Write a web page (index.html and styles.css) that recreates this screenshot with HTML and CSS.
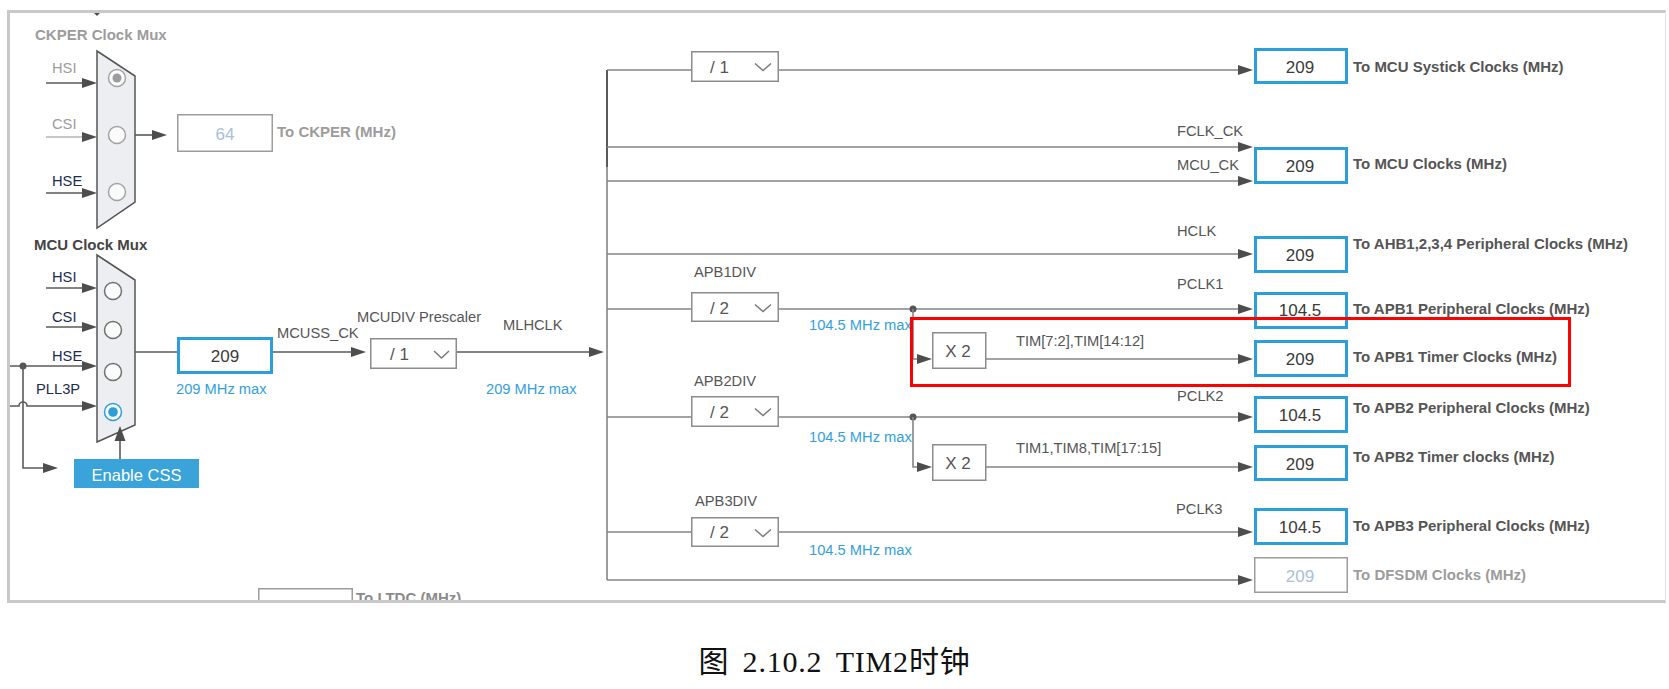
FILE: index.html
```html
<!DOCTYPE html>
<html lang="zh">
<head>
<meta charset="utf-8">
<title>TIM2 Clock</title>
<link rel="stylesheet" href="styles.css">
</head>
<body>
<div class="frame">
<svg class="diagram" viewBox="10 13 1655 587" width="1655" height="587" xmlns="http://www.w3.org/2000/svg">
  <!-- top cut-off mark -->
  <polygon class="ah" points="94,13 100,13 97,16"/>

  <!-- ===== CKPER mux ===== -->
  <text class="tb tdis" x="35" y="40">CKPER Clock Mux</text>
  <text class="t tdis" x="52" y="73">HSI</text>
  <text class="t tdis" x="52" y="129">CSI</text>
  <text class="t tnavy" x="52" y="186">HSE</text>
  <line class="w wd" x1="46" y1="83" x2="84" y2="83"/>
  <polygon class="ah" points="82,78 97,83 82,88"/>
  <line class="w wl" x1="46" y1="137" x2="84" y2="137"/>
  <polygon class="ah" points="82,132 97,137 82,142"/>
  <line class="w wd" x1="46" y1="193" x2="84" y2="193"/>
  <polygon class="ah" points="82,188 97,193 82,198"/>
  <polygon class="mux" points="97,51 135,76 135,202 97,228"/>
  <circle class="rb rb-dis" cx="117" cy="78" r="8.5"/>
  <circle class="rd-dis" cx="117" cy="78" r="4.5"/>
  <circle class="rb rb-dis" cx="117" cy="135" r="8.5"/>
  <circle class="rb rb-dis" cx="117" cy="192" r="8.5"/>
  <line class="w wd" x1="135" y1="135" x2="155" y2="135"/>
  <polygon class="ah" points="152,130 167,135 152,140"/>
  <rect class="gbx" x="177.75" y="114.75" width="94.5" height="36.5"/>
  <text class="v vdis" x="225" y="140">64</text>
  <text class="tb tdis" x="277" y="137">To CKPER (MHz)</text>

  <!-- ===== MCU mux ===== -->
  <text class="tb tdark" x="34" y="250">MCU Clock Mux</text>
  <text class="t tnavy" x="52" y="282">HSI</text>
  <text class="t tnavy" x="52" y="322">CSI</text>
  <text class="t tnavy" x="52" y="361">HSE</text>
  <text class="t tnavy" x="36" y="394">PLL3P</text>
  <line class="w wd" x1="46" y1="288" x2="84" y2="288"/>
  <polygon class="ah" points="82,283 97,288 82,293"/>
  <line class="w wd" x1="46" y1="327" x2="84" y2="327"/>
  <polygon class="ah" points="82,322 97,327 82,332"/>
  <line class="w wd" x1="10" y1="366" x2="84" y2="366"/>
  <polygon class="ah" points="82,361 97,366 82,371"/>
  <circle class="dot" cx="23" cy="366" r="3.5"/>
  <path class="w wd" d="M23 366 V468 H46"/>
  <polygon class="ah" points="43,463 58,468 43,473"/>
  <path class="w wd" d="M10 406 H19 A4 4 0 0 1 27 406 H84"/>
  <polygon class="ah" points="82,401 97,406 82,411"/>
  <polygon class="mux" points="97,255 135,280 135,425 97,442"/>
  <circle class="rb" cx="113" cy="291" r="8.5"/>
  <circle class="rb" cx="113" cy="330" r="8.5"/>
  <circle class="rb" cx="113" cy="372" r="8.5"/>
  <circle class="rb rb-on" cx="113" cy="412" r="8.5"/>
  <circle class="rd-on" cx="113" cy="412" r="4.8"/>
  <line class="w wd" x1="120" y1="459" x2="120" y2="438"/>
  <polygon class="ah" points="114.5,441 120,426 125.5,441"/>
  <rect class="btn" x="74" y="459" width="125" height="29"/>
  <text class="btxt" x="136.5" y="481">Enable CSS</text>

  <line class="w wd" x1="135" y1="352" x2="177" y2="352"/>
  <rect class="bx" x="178.5" y="338.5" width="93" height="34"/>
  <text class="v" x="225" y="362">209</text>
  <text class="tblue" x="176" y="394">209 MHz max</text>
  <text class="t" x="277" y="338">MCUSS_CK</text>
  <line class="w wd" x1="273" y1="352" x2="355" y2="352"/>
  <polygon class="ah" points="351,347 366,352 351,357"/>
  <text class="t" x="357" y="322">MCUDIV Prescaler</text>
  <rect class="dd" x="370.75" y="338.75" width="85.5" height="29.5"/>
  <text class="dt" x="390" y="360">/ 1</text>
  <polyline class="chev" points="434,351 441.5,358 449,351"/>
  <text class="t" x="503" y="330">MLHCLK</text>
  <line class="w wd" x1="457" y1="352" x2="592" y2="352"/>
  <polygon class="ah" points="589,347 604,352 589,357"/>
  <text class="tblue" x="486" y="394">209 MHz max</text>

  <!-- ===== bus ===== -->
  <line class="w" x1="607" y1="70" x2="607" y2="580"/>
  <line class="w wk" x1="607" y1="70" x2="607" y2="167"/>

  <!-- systick -->
  <line class="w" x1="607" y1="70" x2="691" y2="70"/>
  <line class="w" x1="779" y1="70" x2="1241" y2="70"/>
  <polygon class="ah" points="1238,65 1253,70 1238,75"/>
  <rect class="dd" x="691.75" y="51.75" width="86.5" height="29.5"/>
  <text class="dt" x="710" y="73">/ 1</text>
  <polyline class="chev" points="755,63.5 763,70.5 771,63.5"/>
  <rect class="bx" x="1255.5" y="49.5" width="91" height="33"/>
  <text class="v" x="1300" y="73">209</text>
  <text class="tb" x="1353" y="72">To MCU Systick Clocks (MHz)</text>

  <!-- MCU clocks -->
  <line class="w" x1="607" y1="147" x2="1241" y2="147"/>
  <polygon class="ah" points="1238,142 1253,147 1238,152"/>
  <line class="w" x1="607" y1="181" x2="1241" y2="181"/>
  <polygon class="ah" points="1238,176 1253,181 1238,186"/>
  <text class="t" x="1177" y="136">FCLK_CK</text>
  <text class="t" x="1177" y="170">MCU_CK</text>
  <rect class="bx" x="1255.5" y="148.5" width="91" height="34"/>
  <text class="v" x="1300" y="172">209</text>
  <text class="tb" x="1353" y="169">To MCU Clocks (MHz)</text>

  <!-- AHB -->
  <line class="w" x1="607" y1="254" x2="1241" y2="254"/>
  <polygon class="ah" points="1238,249 1253,254 1238,259"/>
  <text class="t" x="1177" y="236">HCLK</text>
  <rect class="bx" x="1255.5" y="237.5" width="91" height="34"/>
  <text class="v" x="1300" y="261">209</text>
  <text class="tb" x="1353" y="249">To AHB1,2,3,4 Peripheral Clocks (MHz)</text>

  <!-- APB1 -->
  <text class="t" x="694" y="277">APB1DIV</text>
  <line class="w" x1="607" y1="309" x2="691" y2="309"/>
  <line class="w" x1="779" y1="309" x2="1241" y2="309"/>
  <polygon class="ah" points="1238,304 1253,309 1238,314"/>
  <rect class="dd" x="691.75" y="292.75" width="86.5" height="28.5"/>
  <text class="dt" x="710" y="314">/ 2</text>
  <polyline class="chev" points="755,304.5 763,311.5 771,304.5"/>
  <text class="tblue" x="809" y="330">104.5 MHz max</text>
  <circle class="dot" cx="913" cy="309" r="3.5"/>
  <path class="w" d="M913 309 V359 H920"/>
  <polygon class="ah" points="917,354 932,359 917,364"/>
  <rect class="dd" x="932.75" y="332.75" width="53" height="35.5"/>
  <text class="v dtc" x="958" y="357">X 2</text>
  <text class="t" x="1016" y="346">TIM[7:2],TIM[14:12]</text>
  <line class="w" x1="986" y1="359" x2="1241" y2="359"/>
  <polygon class="ah" points="1238,354 1253,359 1238,364"/>
  <text class="t" x="1177" y="289">PCLK1</text>
  <rect class="bx" x="1255.5" y="293.5" width="91" height="34"/>
  <text class="v" x="1300" y="316">104.5</text>
  <text class="tb" x="1353" y="314">To APB1 Peripheral Clocks (MHz)</text>
  <rect class="bx" x="1255.5" y="341.5" width="91" height="34"/>
  <text class="v" x="1300" y="365">209</text>
  <text class="tb" x="1353" y="362">To APB1 Timer Clocks (MHz)</text>

  <!-- APB2 -->
  <text class="t" x="694" y="386">APB2DIV</text>
  <line class="w" x1="607" y1="417" x2="691" y2="417"/>
  <line class="w" x1="779" y1="417" x2="1241" y2="417"/>
  <polygon class="ah" points="1238,412 1253,417 1238,422"/>
  <rect class="dd" x="691.75" y="396.75" width="86.5" height="29.5"/>
  <text class="dt" x="710" y="418">/ 2</text>
  <polyline class="chev" points="755,408.5 763,415.5 771,408.5"/>
  <text class="tblue" x="809" y="442">104.5 MHz max</text>
  <circle class="dot" cx="913" cy="417" r="3.5"/>
  <path class="w" d="M913 417 V467 H920"/>
  <polygon class="ah" points="917,462 932,467 917,472"/>
  <rect class="dd" x="932.75" y="444.75" width="53" height="35.5"/>
  <text class="v dtc" x="958" y="469">X 2</text>
  <text class="t" x="1016" y="453">TIM1,TIM8,TIM[17:15]</text>
  <line class="w" x1="986" y1="467" x2="1241" y2="467"/>
  <polygon class="ah" points="1238,462 1253,467 1238,472"/>
  <text class="t" x="1177" y="401">PCLK2</text>
  <rect class="bx" x="1255.5" y="397.5" width="91" height="34"/>
  <text class="v" x="1300" y="421">104.5</text>
  <text class="tb" x="1353" y="413">To APB2 Peripheral Clocks (MHz)</text>
  <rect class="bx" x="1255.5" y="446.5" width="91" height="33"/>
  <text class="v" x="1300" y="470">209</text>
  <text class="tb" x="1353" y="462">To APB2 Timer clocks (MHz)</text>

  <!-- APB3 -->
  <text class="t" x="695" y="506">APB3DIV</text>
  <line class="w" x1="607" y1="532" x2="691" y2="532"/>
  <line class="w" x1="779" y1="532" x2="1241" y2="532"/>
  <polygon class="ah" points="1238,527 1253,532 1238,537"/>
  <rect class="dd" x="691.75" y="517.75" width="86.5" height="28.5"/>
  <text class="dt" x="710" y="538">/ 2</text>
  <polyline class="chev" points="755,529.5 763,536.5 771,529.5"/>
  <text class="tblue" x="809" y="555">104.5 MHz max</text>
  <text class="t" x="1176" y="514">PCLK3</text>
  <rect class="bx" x="1255.5" y="509.5" width="91" height="34"/>
  <text class="v" x="1300" y="533">104.5</text>
  <text class="tb" x="1353" y="531">To APB3 Peripheral Clocks (MHz)</text>

  <!-- DFSDM -->
  <line class="w" x1="607" y1="580" x2="1241" y2="580"/>
  <polygon class="ah" points="1238,575 1253,580 1238,585"/>
  <rect class="gbx" x="1254.75" y="557.75" width="92.5" height="34.5"/>
  <text class="v vdis" x="1300" y="582">209</text>
  <text class="tb tdis" x="1353" y="580">To DFSDM Clocks (MHz)</text>

  <!-- LTDC (clipped) -->
  <rect class="gbx" x="258.75" y="588.75" width="93.5" height="30"/>
  <text class="tb tltdc" x="356" y="603">To LTDC (MHz)</text>

  <!-- highlight -->
  <rect class="hl" x="911.5" y="318.5" width="658" height="67"/>
</svg>
</div>
<p class="caption">图 2.10.2 TIM2时钟</p>
</body>
</html>
```

FILE: styles.css
```css
html, body {
  margin: 0;
  padding: 0;
  background: #ffffff;
}

.frame {
  box-sizing: border-box;
  width: 1659px;
  height: 593px;
  margin: 10px 0 0 7px;
  border: 3px solid #c9c9c9;
  border-right: 1px solid #e3e3e3;
  overflow: hidden;
  background: #ffffff;
}

.diagram {
  display: block;
}

.diagram text {
  font-family: "Liberation Sans", Arial, sans-serif;
}

/* wires */
.w { fill: none; stroke: #858585; stroke-width: 1.6; }
.wd { stroke: #5a5a5a; }
.wl { stroke: #b3b3b3; }
.wk { stroke: #4a4a4a; }
.ah { fill: #4d4d4d; }
.dot { fill: #555555; }

/* mux */
.mux { fill: #eceef1; stroke: #555555; stroke-width: 1.5; }
.rb { fill: #fbfbfb; stroke: #707070; stroke-width: 1.5; }
.rb-dis { stroke: #a3a3a3; }
.rd-dis { fill: #9c9c9c; }
.rb-on { stroke: #2d9fd8; }
.rd-on { fill: #2d9fd8; }

/* boxes */
.bx { fill: #ffffff; stroke: #2d9fd8; stroke-width: 3; }
.gbx { fill: #ffffff; stroke: #9c9c9c; stroke-width: 1.5; }
.dd { fill: #ffffff; stroke: #8c8c8c; stroke-width: 1.5; }
.chev { fill: none; stroke: #7a7a7a; stroke-width: 1.5; }
.btn { fill: #3aa3da; }
.hl { fill: none; stroke: #ff0000; stroke-width: 3; }

/* text */
.t { font-size: 14.7px; fill: #555555; }
.tb { font-size: 15px; font-weight: 700; fill: #555555; }
.tdark { fill: #444444; }
.tdis { fill: #9c9c9c; }
.tltdc { fill: #8a8a8a; }
.tnavy { fill: #1d2b4f; }
.tblue { font-size: 14.7px; fill: #33a0dc; }
.v { font-size: 17px; fill: #3a3a3a; text-anchor: middle; }
.vdis { fill: #a9c0d8; }
.dtc { fill: #555555; }
.dt { font-size: 17px; fill: #555555; }
.btxt { font-size: 16.5px; fill: #ffffff; text-anchor: middle; }

/* caption */
.caption {
  margin: 44px 0 0;
  text-align: center;
  font-family: "Liberation Serif", "Noto Sans CJK SC", serif;
  font-size: 30px;
  line-height: 30px;
  letter-spacing: 0.8px;
  word-spacing: 5px;
  color: #111111;
}
```
